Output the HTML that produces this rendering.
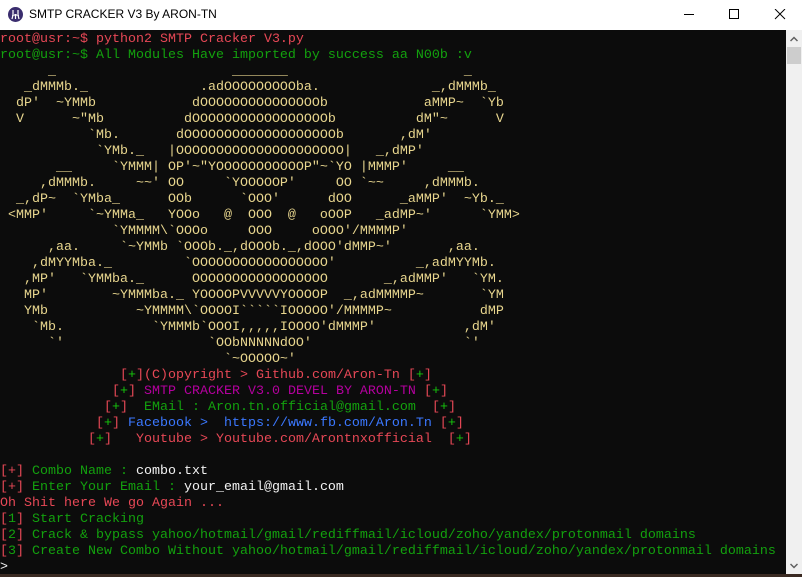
<!DOCTYPE html>
<html><head><meta charset="utf-8"><style>
html,body{margin:0;padding:0;width:802px;height:577px;overflow:hidden;background:#fff;}
#title{position:absolute;left:0;top:0;width:802px;height:30px;background:#fff;}
#title .t{position:absolute;left:29px;top:7px;font:12px "Liberation Sans",sans-serif;color:#000;}
#icon{position:absolute;left:8px;top:7px;width:15px;height:15px;border-radius:50%;background:#3a2d6e;}
#term{position:absolute;left:0;top:30px;width:786px;height:544px;background:#0c0c0c;overflow:hidden;}
#sb{position:absolute;left:786px;top:30px;width:16px;height:544px;background:#f0f0f0;}
#thumb{position:absolute;left:1px;top:17px;width:14px;height:17px;background:#cdcdcd;}
#desk{position:absolute;left:0;top:574px;width:802px;height:3px;background:#3a2a22;}
pre{margin:0;padding-top:2px;font:13.33px/16px "Liberation Mono","DejaVu Sans Mono",monospace;color:#cccccc;white-space:pre;}
.r{color:#e74856}.g{color:#16c60c}.gg{color:#13a10e}.y{color:#e8d68e}.p{color:#b4009e}.b{color:#3b78ff}.w{color:#f2f2f2}
</style></head><body>
<div id="title"><div id="icon"><svg width="15" height="15" viewBox="0 0 15 15"><path d="M5 3v4M10 3v4M4 8h7M5 8l-1 4M10 8l1 4M7.5 7v5" stroke="#fff" stroke-width="1.2" fill="none"/></svg></div><div class="t">SMTP CRACKER V3 By ARON-TN</div>
<svg style="position:absolute;left:684px;top:9px" width="110" height="14" viewBox="0 0 110 14"><path d="M0 5.5h10" stroke="#000" stroke-width="1"/><rect x="45.5" y="0.5" width="9" height="9" fill="none" stroke="#000"/><path d="M91 0l10 10M101 0l-10 10" stroke="#000" stroke-width="1"/></svg>
</div>
<div id="term"><pre><span class="r">root@usr:~$ python2 SMTP Cracker V3.py</span>
<span class="gg">root@usr:~$ All Modules Have imported by success aa N00b :v</span>
<span class="y">      _                      _______                      _
   _dMMMb._              .adOOOOOOOOOba.              _,dMMMb_
  dP'  ~YMMb            dOOOOOOOOOOOOOOOb            aMMP~  &#96;Yb
  V      ~"Mb          dOOOOOOOOOOOOOOOOOb          dM"~      V
           &#96;Mb.       dOOOOOOOOOOOOOOOOOOOb       ,dM'
            &#96;YMb._   |OOOOOOOOOOOOOOOOOOOOO|   _,dMP'
       __     &#96;YMMM| OP'~"YOOOOOOOOOOOP"~&#96;YO |MMMP'     __
     ,dMMMb.     ~~' OO     &#96;YOOOOOP'     OO &#96;~~     ,dMMMb.
  _,dP~  &#96;YMba_      OOb      &#96;OOO'      dOO      _aMMP'  ~Yb._
 &lt;MMP'     &#96;~YMMa_   YOOo   @  OOO  @   oOOP   _adMP~'      &#96;YMM&gt;
              &#96;YMMMM\&#96;OOOo     OOO     oOOO'/MMMMP'
      ,aa.     &#96;~YMMb &#96;OOOb._,dOOOb._,dOOO'dMMP~'       ,aa.
    ,dMYYMba._         &#96;OOOOOOOOOOOOOOOOO'          _,adMYYMb.
   ,MP'   &#96;YMMba._      OOOOOOOOOOOOOOOOO       _,adMMP'   &#96;YM.
   MP'        ~YMMMba._ YOOOOPVVVVVYOOOOP  _,adMMMMP~       &#96;YM
   YMb           ~YMMMM\&#96;OOOOI&#96;&#96;&#96;&#96;&#96;IOOOOO'/MMMMP~           dMP
    &#96;Mb.           &#96;YMMMb&#96;OOOI,,,,,IOOOO'dMMMP'           ,dM'
      &#96;'                  &#96;OObNNNNNdOO'                   &#96;'
                            &#96;~OOOOO~'</span>
               <span class="r">[<span class="g">+</span>](C)opyright &gt; Github.com/Aron-Tn [<span class="g">+</span>]</span>
              <span class="r">[<span class="g">+</span>]</span> <span class="p">SMTP CRACKER V3.0 DEVEL BY ARON-TN</span> <span class="r">[<span class="g">+</span>]</span>
             <span class="r">[<span class="g">+</span>]</span>  <span class="gg">EMail : Aron.tn.official@gmail.com</span>  <span class="r">[<span class="g">+</span>]</span>
            <span class="r">[<span class="g">+</span>]</span> <span class="b">Facebook &gt;  https://www.fb.com/Aron.Tn</span> <span class="r">[<span class="g">+</span>]</span>
           <span class="r">[<span class="g">+</span>]   Youtube &gt; Youtube.com/Arontnxofficial  [<span class="g">+</span>]</span>

<span class="r">[+]</span> <span class="gg">Combo Name :</span> <span class="w">combo.txt</span>
<span class="r">[+]</span> <span class="gg">Enter Your Email :</span> <span class="w">your_email@gmail.com</span>
<span class="r">Oh Shit here We go Again ...</span>
<span class="r">[</span><span class="gg">1</span><span class="r">]</span> <span class="gg">Start Cracking</span>
<span class="r">[</span><span class="gg">2</span><span class="r">]</span> <span class="gg">Crack &amp; bypass yahoo/hotmail/gmail/rediffmail/icloud/zoho/yandex/protonmail domains</span>
<span class="r">[</span><span class="gg">3</span><span class="r">]</span> <span class="gg">Create New Combo Without yahoo/hotmail/gmail/rediffmail/icloud/zoho/yandex/protonmail domains</span>
<span class="w">&gt;</span></pre></div>
<div id="sb"><svg style="position:absolute;left:4px;top:6px" width="8" height="6"><path d="M0.5 5L4 1.5L7.5 5" stroke="#606060" stroke-width="1.5" fill="none"/></svg><div id="thumb"></div><svg style="position:absolute;left:4px;top:533px" width="8" height="6"><path d="M0.5 1L4 4.5L7.5 1" stroke="#606060" stroke-width="1.5" fill="none"/></svg></div>
<div id="desk"></div>
</body></html>
